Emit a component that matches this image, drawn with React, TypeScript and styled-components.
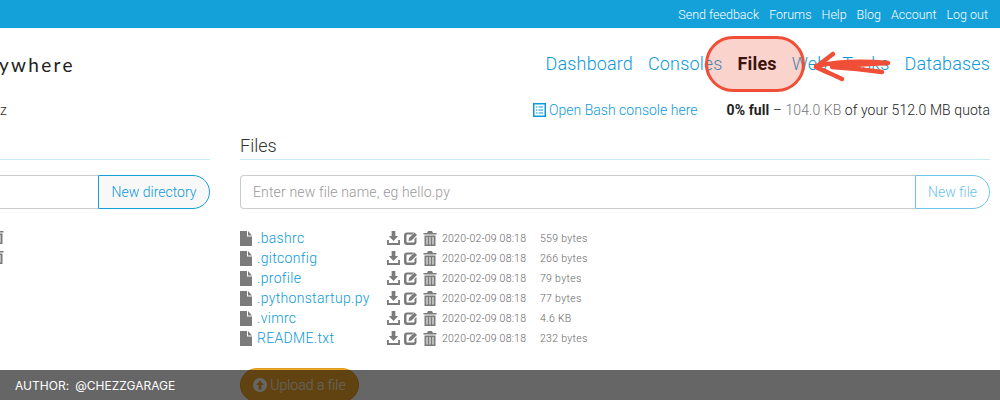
import React from "react";
import styled, { createGlobalStyle } from "styled-components";

const Global = createGlobalStyle`
  html, body { margin: 0; padding: 0; width: 1000px; height: 400px; overflow: hidden; background: #fff; }
  body { font-family: Roboto, "Liberation Sans", sans-serif; font-weight: 300; color: #333; }
`;
const Page = styled.div`
  position: relative;
  width: 1000px;
  height: 400px;
  overflow: hidden;
`;
const TopBar = styled.div`
  height: 28px;
  background: #14a0d9;
  display: flex;
  align-items: center;
  justify-content: flex-end;
  gap: 10px;
  padding-right: 12px;
`;
const TopLink = styled.a`
  color: #fff;
  font-size: 12.5px;
  font-weight: 300;
`;
const Header = styled.div`
  height: 54px;
  padding: 0 10px 0 0;
  display: flex;
  align-items: flex-end;
  justify-content: space-between;
`;
const Logo = styled.div`
  font-family: Lato, sans-serif;
  font-size: 19px;
  font-weight: 400;
  letter-spacing: 2.3px;
  color: #222;
  line-height: 20px;
  padding-bottom: 7px;
  margin-left: -1px;
`;
const Nav = styled.nav`
  display: flex;
  gap: 15px;
  line-height: 22px;
  padding-bottom: 7px;
`;
const NavLink = styled.a<{ $active?: boolean }>`
  font-size: 18px;
  font-weight: ${(p) => (p.$active ? 700 : 300)};
  color: ${(p) => (p.$active ? "#000" : "#0c9ad8")};
  letter-spacing: 0.15px;
`;
const Sub = styled.div`
  display: flex;
  align-items: center;
  height: 20px;
  margin-top: 18px;
  padding-right: 10px;
`;
const UserName = styled.div`
  font-size: 14px;
  flex: 1;
  letter-spacing: 0.3px;
`;
const BashLink = styled.a`
  display: flex;
  align-items: center;
  gap: 3px;
  color: #0c9ad8;
  font-size: 14px;
  font-weight: 300;
  letter-spacing: 0.02px;
  margin-right: 29px;
`;
const Quota = styled.div`
  font-size: 14px;
  font-weight: 300;
  color: #222;
  letter-spacing: 0.08px;
  strong { font-weight: 700; font-size: 14px; }
  span { color: #777; }
`;
const Columns = styled.div`
  display: grid;
  grid-template-columns: 210px 750px;
  gap: 30px;
  margin-top: 10px;
`;
const Column = styled.section`
  min-width: 0;
`;
const Heading = styled.h3`
  margin: 0;
  height: 29px;
  font-size: 18px;
  font-weight: 300;
  line-height: 31px;
  color: #333;
  border-bottom: 1px solid #c6ecf8;
  box-sizing: content-box;
`;
const InputGroup = styled.div`
  display: flex;
  height: 34px;
  margin-top: 15px;
  box-sizing: border-box;
`;
const Input = styled.div<{ $clip?: boolean }>`
  flex: 1;
  border: 1px solid #ccc;
  border-top-width: 1.5px;
  border-right: 0;
  border-radius: ${(p) => (p.$clip ? "0" : "4px 0 0 4px")};
  border-left-width: ${(p) => (p.$clip ? 0 : "1px")};
  padding-left: 12px;
  display: flex;
  align-items: center;
  font-size: 14px;
  color: #999;
  letter-spacing: 0.15px;
`;
const GroupButton = styled.div<{ $dim?: boolean }>`
  border: 1px solid ${(p) => (p.$dim ? "#70c5ea" : "#14a0d9")};
  border-radius: 0 17px 17px 0;
  background: ${(p) => (p.$dim ? "#fff" : "#f8f8f8")};
  color: ${(p) => (p.$dim ? "#6cc2e8" : "#0c9ad8")};
  display: flex;
  align-items: center;
  justify-content: center;
  font-size: 14px;
  font-weight: 300;
  box-sizing: border-box;
  width: ${(p) => (p.$dim ? "75px" : "112px")};
`;
const FileList = styled.div`
  margin-top: 19px;
`;
const FileRow = styled.div`
  display: flex;
  align-items: center;
  height: 20px;
`;
const NameCell = styled.div`
  width: 147px;
  display: flex;
  align-items: center;
  gap: 5px;
  a { color: #0c9ad8; font-size: 14px; font-weight: 300; letter-spacing: 0.32px; }
`;
const Actions = styled.div`
  display: flex;
  align-items: center;
  gap: 4px;
  width: 55px;
`;
const DateCell = styled.div`
  width: 98px;
  font-size: 10.5px;
  color: #666;
  letter-spacing: 0.22px;
`;
const SizeCell = styled.div`
  font-size: 10.5px;
  color: #666;
  letter-spacing: 0.3px;
`;
const LeftRows = styled.div`
  margin-top: 20px;
  display: flex;
  flex-direction: column;
  gap: 5px;
  align-items: flex-start;
  margin-left: -10px;
`;
const UploadButton = styled.div`
  margin-top: 20px;
  width: 119px;
  height: 34px;
  border: 1px solid #dd9a1e;
  border-radius: 17px;
  background: #f0a92a;
  color: #fff;
  display: flex;
  align-items: center;
  justify-content: center;
  gap: 3px;
  font-size: 14px;
  box-sizing: border-box;
`;
const Footer = styled.div`
  position: absolute;
  left: 0;
  right: 0;
  bottom: 0;
  height: 30px;
  background: rgba(0, 0, 0, 0.6);
  color: #fff;
  display: flex;
  align-items: center;
  padding-left: 15px;
  font-family: Inter, sans-serif;
  font-size: 12px;
  font-weight: 400;
  gap: 6px;
  letter-spacing: 0.02px;
`;
const Highlight = styled.div`
  position: absolute;
  left: 705px;
  top: 36px;
  width: 100px;
  height: 56px;
  box-sizing: border-box;
  border: 3px solid #f04e36;
  border-radius: 28px;
  background: rgba(240, 78, 54, 0.25);
`;
const Arrow = styled.svg`
  position: absolute;
  left: 810px;
  top: 50px;
`;

const Fill = "#7b7b7b";
const FileIcon = () => (
  <svg width="12" height="15" viewBox="0 0 12 15">
    <path d="M0 0h7v5.500h5V15H0z M8 0l4 4.500H8z" fill={Fill} />
  </svg>
);
const Download = () => (
  <svg width="13" height="14" viewBox="0 0 14 14" preserveAspectRatio="none">
    <path d="M5 0h4v5h3L7 10 2 5h3z M0 9h2v3h10V9h2v5H0z" fill={Fill} />
  </svg>
);
const Edit = () => (
  <svg width="15" height="14" viewBox="0 0 15 14">
    <path d="M3 1.500h7L8 3.500H3.500a1 1 0 0 0-1 1v6a1 1 0 0 0 1 1h6a1 1 0 0 0 1-1V8l2-2v5a3 3 0 0 1-3 3H3a3 3 0 0 1-3-3V4.500a3 3 0 0 1 3-3z" fill={Fill} />
    <path d="M5 7l5.500-5.500 2.500 2.500L7.500 9.500 4.500 10z" fill={Fill} />
  </svg>
);
const Trash = () => (
  <svg width="14" height="15" viewBox="0 0 14 15">
    <path d="M5 0h4l1 2h3.500v1.500H.5V2H4z" fill={Fill} />
    <path d="M1.500 4.500h11V15h-11z M3.500 6v7.500h1V6z M6.500 6v7.500h1V6z M9.500 6v7.500h1V6z" fill={Fill} fillRule="evenodd" />
  </svg>
);
const ListAlt = () => (
  <svg width="13" height="14" viewBox="0 0 13 14">
    <path d="M0 0h13v14H0z M1.500 1.500v11h10v-11z M3 3.500h1.500v1H3z M5.500 3.500H10v1H5.500z M3 6.500h1.500v1H3z M5.500 6.500H10v1H5.500z M3 9.500h1.500v1H3z M5.500 9.500H10v1H5.500z" fill="#0c9ad8" fillRule="evenodd" />
  </svg>
);
const UpCircle = () => (
  <svg width="14" height="14" viewBox="0 0 14 14">
    <path d="M7 0a7 7 0 1 1 0 14A7 7 0 0 1 7 0z M7 2.500L3 7h2.500v4.500h3V7H11z" fill="#fff" fillRule="evenodd" />
  </svg>
);

const files: [string, string][] = [
  [".bashrc", "559 bytes"],
  [".gitconfig", "266 bytes"],
  [".profile", "79 bytes"],
  [".pythonstartup.py", "77 bytes"],
  [".vimrc", "4.6 KB"],
  ["README.txt", "232 bytes"],
];
const top = ["Send feedback", "Forums", "Help", "Blog", "Account", "Log out"];

export default function App() {
  return (
    <Page>
      <Global />
      <TopBar>
        {top.map((t) => (
          <TopLink key={t}>{t}</TopLink>
        ))}
      </TopBar>
      <Header>
        <Logo>ywhere</Logo>
        <Nav>
          <NavLink>Dashboard</NavLink>
          <NavLink>Consoles</NavLink>
          <NavLink $active>Files</NavLink>
          <NavLink>Web</NavLink>
          <NavLink>Tasks</NavLink>
          <NavLink>Databases</NavLink>
        </Nav>
      </Header>
      <Sub>
        <UserName>z</UserName>
        <BashLink>
          <ListAlt />
          Open Bash console here
        </BashLink>
        <Quota>
          <strong>0% full</strong> – <span>104.0 KB</span> of your 512.0 MB quota
        </Quota>
      </Sub>
      <Columns>
        <Column>
          <Heading />
          <InputGroup>
            <Input $clip />
            <GroupButton>New directory</GroupButton>
          </InputGroup>
          <LeftRows>
            <Trash />
            <Trash />
          </LeftRows>
        </Column>
        <Column>
          <Heading>Files</Heading>
          <InputGroup>
            <Input>Enter new file name, eg hello.py</Input>
            <GroupButton $dim>New file</GroupButton>
          </InputGroup>
          <FileList>
            {files.map(([name, size]) => (
              <FileRow key={name}>
                <NameCell>
                  <FileIcon />
                  <a>{name}</a>
                </NameCell>
                <Actions>
                  <Download />
                  <Edit />
                  <Trash />
                </Actions>
                <DateCell>2020-02-09 08:18</DateCell>
                <SizeCell>{size}</SizeCell>
              </FileRow>
            ))}
          </FileList>
          <UploadButton>
            <UpCircle />
            Upload a file
          </UploadButton>
        </Column>
      </Columns>
      <Highlight />
      <Arrow width="84" height="34" viewBox="0 0 84 34">
        <path
          d="M6 17 L23 4 M6 17 C14 21 24 25 32 29 M6 16 C30 11 55 11 78 13 C60 14 40 14 22 17 C40 18 58 20 72 22"
          fill="none"
          stroke="#f04e36"
          strokeWidth="4.500"
          strokeLinecap="round"
          strokeLinejoin="round"
        />
      </Arrow>
      <Footer>
        <span>AUTHOR:</span>
        <span>@CHEZZGARAGE</span>
      </Footer>
    </Page>
  );
}
